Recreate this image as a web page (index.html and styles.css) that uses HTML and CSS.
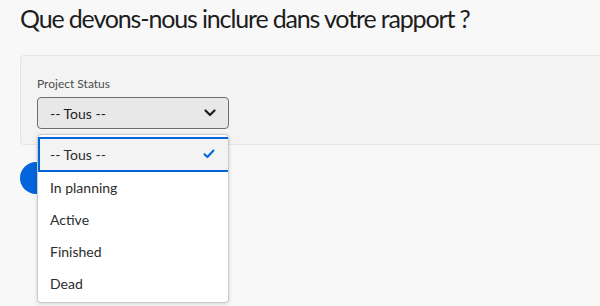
FILE: index.html
```html
<!DOCTYPE html>
<html lang="fr">
<head>
<meta charset="utf-8">
<link rel="stylesheet" href="styles.css">
</head>
<body>
<div class="page">
  <h1 class="title">Que devons-nous inclure dans votre rapport ?</h1>
  <section class="panel">
    <label class="field-label">Project Status</label>
    <div class="select">
      <span class="select-value">-- Tous --</span>
      <svg class="chevron" width="12" height="8" viewBox="0 0 12 8"><path d="M1.5 1.5 L6 6 L10.5 1.5" fill="none" stroke="#1d1d1d" stroke-width="2.2" stroke-linecap="round" stroke-linejoin="round"/></svg>
    </div>
  </section>
  <div class="actions">
    <button class="run-btn" aria-label="Exécuter"></button>
  </div>
  <ul class="menu">
    <li class="menu-item selected"><span>-- Tous --</span>
      <svg class="check" width="12" height="10" viewBox="0 0 12 10"><path d="M1.5 5.2 L4.4 8 L10.5 1.5" fill="none" stroke="#0265dc" stroke-width="2" stroke-linecap="round" stroke-linejoin="round"/></svg>
    </li>
    <li class="menu-item">In planning</li>
    <li class="menu-item">Active</li>
    <li class="menu-item">Finished</li>
    <li class="menu-item">Dead</li>
  </ul>
</div>
</body>
</html>
```

FILE: styles.css
```css
html, body {
  margin: 0;
  padding: 0;
}
body {
  background: #f8f8f8;
  font-family: "Lato", "Noto Sans", sans-serif;
  color: #222;
  width: 600px;
  height: 306px;
  overflow: hidden;
}
.page {
  position: relative;
  padding: 0 0 0 20px;
}
.title {
  margin: 0;
  font-weight: 400;
  font-size: 25px;
  line-height: 36px;
  color: #1d1d1d;
  letter-spacing: -1.15px;
  white-space: nowrap;
}
.panel {
  margin-top: 19px;
  width: 600px;
  height: 90px;
  box-sizing: border-box;
  background: #f3f3f3;
  border: 1px solid #e4e4e4;
  border-radius: 4px;
  padding: 20px 16px 0;
}
.field-label {
  display: block;
  font-size: 12px;
  line-height: 15px;
  color: #4b4b4b;
  margin-bottom: 6px;
}
.select {
  width: 192px;
  height: 32px;
  box-sizing: border-box;
  border: 1px solid #6e6e6e;
  border-radius: 4px;
  background: #e8e8e8;
  display: flex;
  align-items: center;
  justify-content: space-between;
  padding: 0 12px 0 12px;
}
.select-value {
  font-size: 14px;
  color: #1d1d1d;
}
.actions {
  margin-top: 17px;
}
.run-btn {
  display: block;
  height: 32px;
  width: 120px;
  border: none;
  border-radius: 16px;
  background: #0265dc;
}
.menu {
  position: absolute;
  left: 37px;
  top: 134px;
  width: 192px;
  box-sizing: border-box;
  margin: 0;
  padding: 2px 0;
  list-style: none;
  background: #fff;
  border: 1px solid #cacaca;
  border-radius: 4px;
  box-shadow: 0 1px 4px rgba(0, 0, 0, 0.15);
}
.menu-item {
  height: 32px;
  box-sizing: border-box;
  display: flex;
  align-items: center;
  justify-content: space-between;
  padding: 0 13px 1px 12px;
  font-size: 14px;
  color: #2c2c2c;
}
.menu-item.selected {
  height: 35px;
  background: #f3f3f3;
  border-top: 2px solid #0265dc;
  border-bottom: 2px solid #0265dc;
  border-left: 2px solid #0265dc;
  padding-left: 10px;
}
```
